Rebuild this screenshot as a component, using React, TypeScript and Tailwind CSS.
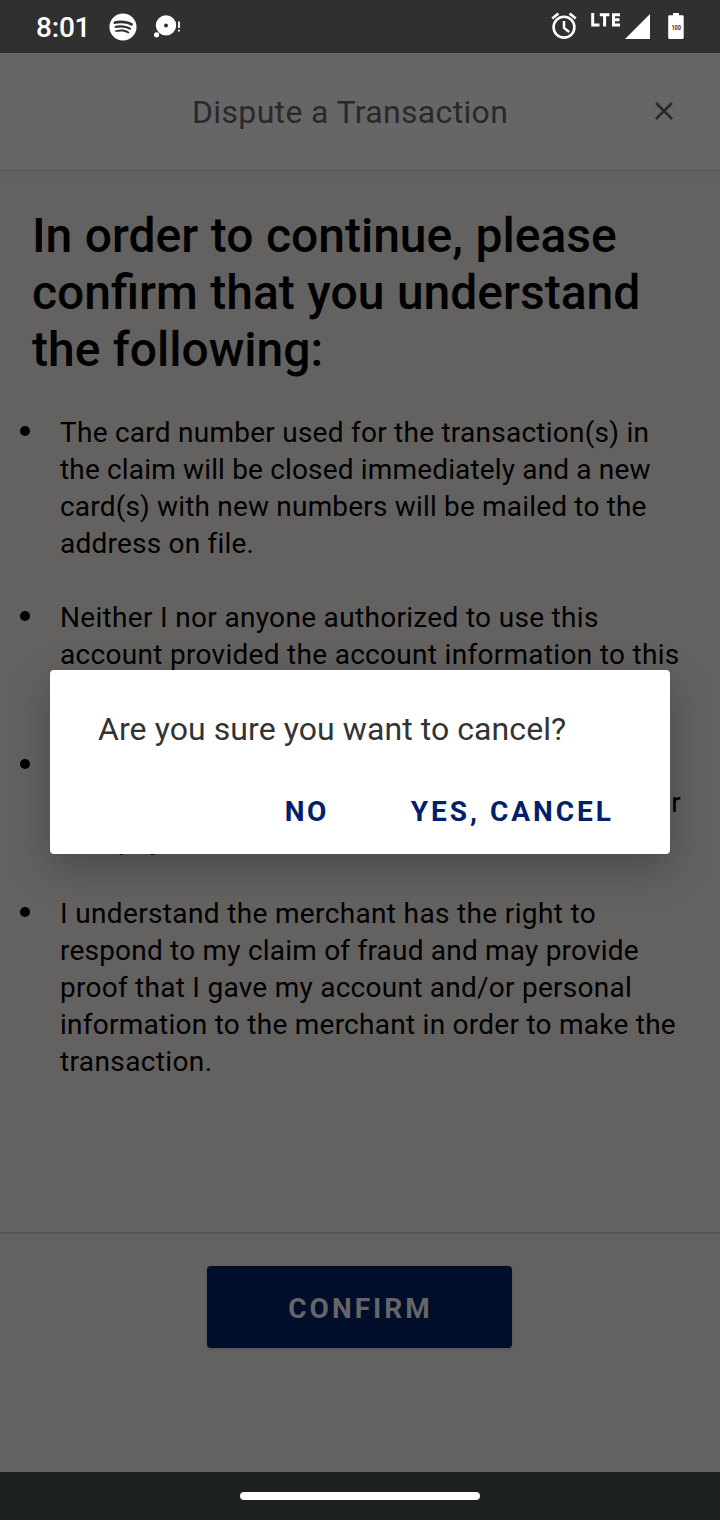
import React from "react";
import { FaSpotify } from "react-icons/fa";

type Line = { text: string; className: string };

const items: Line[][] = [
  [
    { text: "The card number used for the transaction(s) in", className: "tracking-[0.25px]" },
    { text: "the claim will be closed immediately and a new", className: "tracking-[0.16px]" },
    { text: "card(s) with new numbers will be mailed to the", className: "tracking-[0.18px]" },
    { text: "address on file.", className: "tracking-[0.22px]" },
  ],
  [
    { text: "Neither I nor anyone authorized to use this", className: "tracking-[0.32px]" },
    { text: "account provided the account information to this", className: "tracking-[0.3px]" },
    { text: "merchant.", className: "tracking-[0.25px]" },
  ],
  [
    { text: "I have not received any benefit from the claim", className: "tracking-[0.25px]" },
    { text: "and no one that I know made this transaction or", className: "tracking-[0.62px]" },
    { text: "that payment.", className: "tracking-[0.4px]" },
  ],
  [
    { text: "I understand the merchant has the right to", className: "tracking-[0.35px]" },
    { text: "respond to my claim of fraud and may provide", className: "tracking-[0.21px]" },
    { text: "proof that I gave my account and/or personal", className: "tracking-[0.26px]" },
    { text: "information to the merchant in order to make the", className: "tracking-[0.26px]" },
    { text: "transaction.", className: "tracking-[0.38px]" },
  ],
];

function StatusBar() {
  return (
    <div className="flex h-[53px] shrink-0 items-center justify-between bg-[#303030] pl-9 pr-[35px] text-white">
      <div className="flex items-center">
        <span className="w-[73px] pt-[2px] text-[28px] font-medium leading-[51px] tracking-[-0.2px]">8:01</span>
        <FaSpotify className="h-7 w-7" />
        <svg className="ml-[17px] h-7 w-7" viewBox="0 0 28 28" fill="currentColor">
          <path
            fillRule="evenodd"
            d="M12 2.2a10.2 10.2 0 1 1 0 20.4a10.2 10.2 0 0 1 0-20.4ZM12 10.4a2 2 0 1 0 0 4a2 2 0 0 0 0-4Z"
          />
          <circle cx="2.6" cy="21.8" r="2.6" />
          <path d="M24.1 8.6h1.8v6.4h-1.8zM24.1 16.8h1.8v1.8h-1.8z" />
        </svg>
      </div>
      <div className="flex items-center">
        <svg className="h-[53px] w-[29px]" viewBox="0 0 29 53" fill="none" stroke="#fff">
          <circle cx="14" cy="27.2" r="10.4" strokeWidth="2.6" />
          <path d="M14 21v7l5.2 4" strokeWidth="2.5" />
          <path d="M2.2 18.6l6.2-5.2M25.8 18.6l-6.2-5.2" strokeWidth="2.6" />
        </svg>
        <svg className="ml-[11px] h-[53px] w-[95px]" viewBox="40 0 95 53" fill="none">
          <path d="M42.7 13v12h6.8M49.8 14.7h9.6M54.6 14v12.5M70 14.7h-6.5v10.3H70M63.5 19.8H69.5" stroke="#fff" strokeWidth="3" />
          <path d="M75 39L100 14v25z" fill="#fff" />
          <path d="M123 13h6v2.3h3.5a1.2 1.2 0 0 1 1.2 1.2v21a1.5 1.5 0 0 1-1.5 1.5h-12.5a1.5 1.5 0 0 1-1.5-1.5v-21a1.2 1.2 0 0 1 1.2-1.2h3.6z" fill="#fff" />
          <text x="126.2" y="30" textAnchor="middle" fontSize="7" fontWeight="700" textLength="9.5" lengthAdjust="spacingAndGlyphs" fill="#303030">
            100
          </text>
        </svg>
      </div>
    </div>
  );
}

export default function App() {
  return (
    <div className="relative flex h-[1520px] w-[720px] flex-col overflow-hidden bg-[#646260] font-['Roboto',sans-serif] text-black">
      <StatusBar />
      <header className="z-10 grid h-[116px] shrink-0 grid-cols-[1fr_56px] items-center bg-[#666666] pl-[192px] pr-7 text-[#292929] shadow-[0_3px_12px_rgba(0,0,0,0.07)]">
        <h1 className="pt-[2px] text-[32px] leading-[38px] tracking-[0.34px]">Dispute a Transaction</h1>
        <button aria-label="Close" className="flex items-center justify-center">
          <svg className="h-[18px] w-[18px]" viewBox="0 0 18 18" stroke="currentColor" strokeWidth="2.6">
            <path d="M1 1l16 16M17 1L1 17" />
          </svg>
        </button>
      </header>

      <main className="h-[1063px] shrink-0 pt-[38px]">
        <h2 className="pl-8 text-[48px] font-medium leading-[57px] [word-spacing:0.55px]">
          In order to continue, please
          <br />
          confirm that you understand
          <br />
          the following:
        </h2>
        <ul className="mt-[36px] flex flex-col gap-[37px] text-[28px] leading-[37px]">
          {items.map((lines) => (
            <li key={lines[0].text} className="flex pl-5">
              <span className="mt-[12px] h-[10px] w-[10px] shrink-0 rounded-full bg-black" />
              <p className="ml-[30px] whitespace-nowrap">
                {lines.map((line) => (
                  <span key={line.text} className={`block ${line.className}`}>
                    {line.text}
                  </span>
                ))}
              </p>
            </li>
          ))}
        </ul>
      </main>

      <footer className="flex h-[240px] shrink-0 items-start justify-center border-t-2 border-[#565553] pt-8">
        <button className="-ml-px h-[82px] w-[305px] rounded bg-[#000d2b] pl-[2px] pt-[4px] text-[28px] font-bold tracking-[3px] text-[#666666] shadow-[0_1px_3px_rgba(0,0,0,0.15)]">
          CONFIRM
        </button>
      </footer>

      <nav className="flex h-12 shrink-0 items-center justify-center bg-[#1c2021]">
        <div className="h-2 w-60 rounded-full bg-white" />
      </nav>

      <div
        role="dialog"
        className="absolute left-[50px] top-[670px] z-20 flex h-[184px] w-[620px] flex-col rounded bg-white shadow-[0_14px_40px_rgba(0,0,0,0.26)]"
      >
        <p className="pl-12 pt-10 text-[32px] leading-[38px] tracking-[0.08px] text-[#333333]">
          Are you sure you want to cancel?
        </p>
        <div className="mt-[47px] flex justify-end gap-[82px] pr-[56px] text-[28px] font-bold leading-[34px] text-[#00206b]">
          <button className="tracking-[2.5px]">NO</button>
          <button className="tracking-[3px]">YES, CANCEL</button>
        </div>
      </div>
    </div>
  );
}
